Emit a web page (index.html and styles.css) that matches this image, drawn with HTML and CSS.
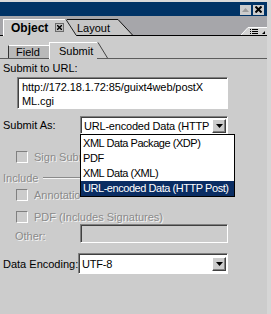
FILE: index.html
```html
<!DOCTYPE html>
<html lang="en">
<head>
    <meta charset="UTF-8">
    <title>Object - Submit</title>
    <link rel="stylesheet" href="styles.css">
</head>
<body>
<div class="palette">
    <div class="title-bar">
        <span class="title-btn"><svg width="7" height="4"><polygon points="0,4 3.5,0 7,4" fill="#9c9c9c"/></svg></span>
        <span class="title-btn"><svg width="7" height="7"><path d="M0.5 0.5 L6.5 6.5 M6.5 0.5 L0.5 6.5" stroke="#000" stroke-width="2"/></svg></span>
    </div>

    <div class="tab-strip">
        <div class="tab active">
            <b>Object</b>
            <span class="tab-close"><svg width="5" height="5"><path d="M0 0 L5 5 M5 0 L0 5" stroke="#000" stroke-width="1.4"/></svg></span>
            <svg class="ear" width="12" height="17"><polygon points="0,0 1,0 11.5,17 0,17" fill="#cccccc"/><line x1="1" y1="0.5" x2="11" y2="16" stroke="#222" stroke-width="1"/></svg>
        </div>
        <div class="tab">
            Layout
            <svg class="ear" width="16" height="16"><polygon points="0,0.5 1,0.5 15.5,16 0,16" fill="#c6c6c6"/><polyline points="0,0.5 1,0.5 15.5,16" fill="none" stroke="#111" stroke-width="1"/></svg>
        </div>
        <div class="tab-menu">
            <svg width="26" height="8">
                <polygon points="0,8 7,0.5 26,0.5 26,8" fill="#d2d2d2"/>
                <polyline points="0,8 7,0.5 26,0.5" fill="none" stroke="#fff" stroke-width="1"/>
                <rect x="9" y="2" width="1" height="1" fill="#000"/>
                <rect x="11" y="2" width="6" height="1" fill="#000"/>
                <rect x="9" y="4" width="1" height="1" fill="#000"/>
                <rect x="11" y="4" width="6" height="1" fill="#000"/>
                <rect x="9" y="6" width="1" height="1" fill="#000"/>
                <rect x="11" y="6" width="6" height="1" fill="#000"/>
                <polygon points="24,4 24,7 21,7" fill="#000"/>
            </svg>
        </div>
    </div>

    <div class="panel">
        <div class="subtabs">
            <div class="subtab">Field</div>
            <div class="subtab active">
                Submit
                <svg class="ear" width="11" height="16"><polygon points="0,0.5 1,0.5 10.5,16 0,16" fill="#cccccc"/><line x1="1" y1="0.5" x2="10.5" y2="16" stroke="#444" stroke-width="1"/></svg>
            </div>
        </div>

        <div class="label">Submit to URL:</div>
        <div class="textarea">http://172.18.1.72:85/guixt4web/postX<br>ML.cgi</div>

        <div class="row row-submit">
            <span class="label">Submit As:</span>
            <div class="combo">
                <div class="select">
                    <span class="select-text">URL-encoded Data (HTTP</span>
                    <span class="drop-btn"><svg width="7" height="4"><polygon points="0,0 7,0 3.5,4" fill="#000"/></svg></span>
                </div>
                <ul class="drop-list">
                    <li>XML Data Package (XDP)</li>
                    <li>PDF</li>
                    <li>XML Data (XML)</li>
                    <li class="selected">URL-encoded Data (HTTP Post)</li>
                </ul>
            </div>
        </div>

        <div class="check check-sign disabled"><span class="box"></span><span class="check-text">Sign Submission</span></div>

        <div class="group">
            <span class="label disabled">Include</span>
            <span class="rule"></span>
        </div>
        <div class="check check-annot disabled"><span class="box"></span><span class="check-text">Annotations</span></div>
        <div class="check check-pdf disabled"><span class="box"></span>PDF (Includes Signatures)</div>

        <div class="row row-other">
            <span class="label disabled">Other:</span>
            <div class="field"></div>
        </div>

        <div class="row row-enc">
            <span class="label">Data Encoding:</span>
            <div class="select tall">
                <span class="select-text">UTF-8</span>
                <span class="drop-btn"><svg width="7" height="4"><polygon points="0,0 7,0 3.5,4" fill="#000"/></svg></span>
            </div>
        </div>
    </div>
</div>
</body>
</html>
```

FILE: styles.css
```css
body {
    margin: 0;
    background: #d6d6d6;
    font-family: "Liberation Sans", Arial, sans-serif;
    font-size: 11px;
    color: #000;
}

.palette {
    width: 271px;
    height: 314px;
    box-sizing: border-box;
    border-top: 2px solid #dadada;
    border-right: 4px solid #d6d6d6;
    background: #cccccc;
    display: flex;
    flex-direction: column;
    overflow: hidden;
}

/* title bar */
.title-bar {
    height: 14px;
    background: #003366;
    display: flex;
    justify-content: flex-end;
    align-items: center;
    gap: 2px;
    padding-right: 3px;
    padding-top: 1px;
    box-sizing: border-box;
}

.title-btn {
    width: 11px;
    height: 10px;
    background: #cdcdcd;
    display: flex;
    align-items: center;
    justify-content: center;
}

/* main tabs */
.tab-strip {
    height: 20px;
    box-sizing: border-box;
    background: #a6a6aa;
    border-bottom: 1px solid #000;
    display: flex;
    align-items: flex-end;
    padding-left: 3px;
}

.tab {
    position: relative;
    height: 16px;
    box-sizing: border-box;
    display: flex;
    align-items: center;
    background: #c6c6c6;
    border-top: 1px solid #111;
    margin-left: 2px;
    width: 50px;
    padding-left: 10px;
}

.tab .ear {
    position: absolute;
    top: -1px;
    left: 100%;
}

.tab.active {
    z-index: 2;
    width: 62px;
    height: 17px;
    margin-bottom: -1px;
    margin-left: 0;
    padding-left: 7px;
    padding-bottom: 1px;
    background: #cccccc;
    border-top: 1px solid #fff;
    border-left: 1px solid #fff;
}

.tab.active b {
    font-size: 12px;
}

.tab-close {
    width: 7px;
    height: 7px;
    margin-left: 7px;
    border: 1px solid #6a6a6a;
    background: #bdbdbd;
    display: flex;
    align-items: center;
    justify-content: center;
}

.tab-menu {
    margin-left: auto;
    height: 8px;
    display: flex;
}

/* panel */
.panel {
    flex: 1;
    display: flex;
    flex-direction: column;
    align-items: flex-start;
    padding-left: 3px;
}

.subtabs {
    align-self: stretch;
    height: 23px;
    box-sizing: border-box;
    border-bottom: 1px solid #5c5c5c;
    display: flex;
    align-items: flex-end;
    padding-left: 8px;
    margin-left: -3px;
}

.subtab {
    position: relative;
    height: 13px;
    box-sizing: border-box;
    width: 41px;
    padding-left: 7px;
    display: flex;
    align-items: center;
    background: #b9b9b9;
    border-top: 1px solid #fff;
    border-left: 1px solid #333;
}

.subtab.active {
    z-index: 1;
    height: 17px;
    width: 48px;
    margin-bottom: -1px;
    padding-left: 9px;
    padding-bottom: 1px;
    background: #cccccc;
    border-left: 1px solid #fff;
}

.subtab .ear {
    position: absolute;
    top: -1px;
    left: 100%;
}

.label {
    line-height: 14px;
    white-space: nowrap;
}

.panel > .label {
    margin-top: 2px;
}

.disabled {
    color: #8a8a8a;
    text-shadow: 1px 1px 0 #f4f4f4;
}

.textarea {
    margin-top: 2px;
    margin-left: 14px;
    width: 211px;
    height: 32px;
    box-sizing: border-box;
    background: #fff;
    border-top: 1px solid #808080;
    border-left: 1px solid #808080;
    border-right: 1px solid #fff;
    border-bottom: 1px solid #fff;
    box-shadow: inset 1px 1px 0 #404040;
    padding: 2px 0 0 4px;
    line-height: 14px;
    letter-spacing: -0.1px;
}

.row {
    display: flex;
    align-items: center;
}

.row .label {
    width: 77px;
}

.row-submit {
    margin-top: 7px;
}

.combo {
    position: relative;
}

.select {
    width: 148px;
    height: 18px;
    box-sizing: border-box;
    background: #fff;
    border-top: 1px solid #808080;
    border-left: 1px solid #808080;
    border-right: 1px solid #fff;
    border-bottom: 1px solid #fff;
    box-shadow: inset 1px 1px 0 #404040;
    display: flex;
    align-items: center;
    padding: 1px 1px 0 3px;
}

.select.tall {
    height: 21px;
    margin-left: -2px;
    width: 150px;
}

.select-text {
    flex: 1;
    overflow: hidden;
    white-space: nowrap;
    letter-spacing: -0.2px;
}

.drop-btn {
    flex: none;
    width: 14px;
    height: 14px;
    box-sizing: border-box;
    background: #cccccc;
    border-top: 1px solid #fff;
    border-left: 1px solid #fff;
    border-right: 1px solid #404040;
    border-bottom: 1px solid #404040;
    box-shadow: inset -1px -1px 0 #808080;
    display: flex;
    align-items: center;
    justify-content: center;
}

.drop-list {
    position: absolute;
    top: 100%;
    left: 0;
    z-index: 5;
    width: 155px;
    margin: 0;
    padding: 1px 0 0;
    list-style: none;
    background: #fff;
    border: 1px solid #000;
    box-sizing: border-box;
    letter-spacing: -0.45px;
}

.drop-list li {
    height: 15px;
    line-height: 15px;
    padding-left: 2px;
    white-space: nowrap;
}

.drop-list li.selected {
    background: #0a2d63;
    color: #fff;
}

.check {
    display: flex;
    align-items: center;
    height: 13px;
    margin-left: 13px;
    white-space: nowrap;
}

.check .box {
    flex: none;
    width: 12px;
    height: 12px;
    box-sizing: border-box;
    margin-right: 6px;
    border-top: 1px solid #808080;
    border-left: 1px solid #808080;
    border-right: 1px solid #fff;
    border-bottom: 1px solid #fff;
}

/* these labels run under the open drop list */
.check-text {
    width: 46px;
    overflow: hidden;
}

.check-sign {
    margin-top: 16px;
}

.group {
    align-self: stretch;
    display: flex;
    align-items: center;
    margin-top: 8px;
}

.rule {
    width: 40px;
    margin-left: 5px;
    border-top: 1px solid #8a8a8a;
    border-bottom: 1px solid #f4f4f4;
}

.check-annot {
    margin-top: 3px;
}

.check-pdf {
    margin-top: 9px;
}

.row-other .label {
    padding-left: 12px;
    width: 65px;
    padding-top: 6px;
}

.field {
    width: 148px;
    height: 19px;
    box-sizing: border-box;
    border-top: 1px solid #808080;
    border-left: 1px solid #808080;
    border-right: 1px solid #fff;
    border-bottom: 1px solid #fff;
    box-shadow: inset 1px 1px 0 #404040;
}

.row-enc {
    margin-top: 10px;
}
```
